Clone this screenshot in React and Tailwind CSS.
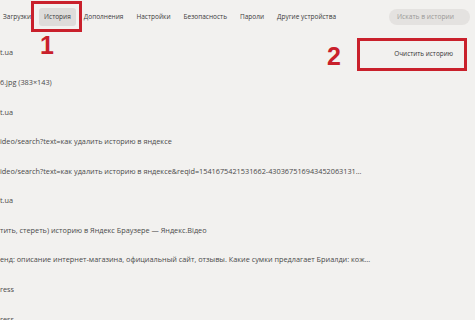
import React from 'react';

const NAV = ['Загрузки', 'История', 'Дополнения', 'Настройки', 'Безопасность', 'Пароли', 'Другие устройства'];

const ROWS = [
  't.ua',
  '6.jpg (383×143)',
  't.ua',
  'ideo/search?text=как удалить историю в яндексе',
  'ideo/search?text=как удалить историю в яндексе&reqid=1541675421531662-430367516943452063131…',
  't.ua',
  'тить, стереть) историю в Яндекс Браузере — Яндекс.Відео',
  'енд: описание интернет-магазина, официальный сайт, отзывы. Какие сумки предлагает Бриалди: кож…',
  'ress',
  'ress',
];

const App = () => {
  return (
    <div
      className="relative w-[475px] h-[320px] overflow-hidden bg-[#f2f1ef] text-[#3a3a3a]"
      style={{ fontFamily: '"Open Sans", "Liberation Sans", sans-serif' }}
    >
      {/* top bar */}
      <div className="flex items-center h-[34px] pl-[3px] pr-[5px] text-[6.5px]">
        <div className="flex items-center gap-[13px]">
          {NAV.map((item) => (
            <span
              key={item}
              className={item === 'История' ? 'bg-[#dedcda] rounded-[3px] px-[5px] py-[4px] -mx-[5px]' : ''}
            >
              {item}
            </span>
          ))}
        </div>
        <div className="ml-auto w-[81px] h-[16px] rounded-full bg-[#e4e2e0] flex items-center px-[8px] text-[6.7px] text-[#9a9896]">
          Искать в истории
        </div>
      </div>

      {/* history list + clear button */}
      <div className="flex justify-between">
        <div className="flex flex-col pt-[4px] w-[350px] text-[7.3px] text-[#4a4a4a]">
          {ROWS.map((row, i) => (
            <div key={i} className="h-[29.6px] flex items-center whitespace-nowrap">
              {row}
            </div>
          ))}
        </div>
        <div className="mt-[6px] mr-[8px] w-[105px] h-[28px] flex items-center justify-end pr-[14px] text-[6.4px] text-[#333]">
          Очистить историю
        </div>
      </div>

      {/* annotations */}
      <div className="absolute left-[31px] top-[1px] w-[51px] h-[31px] border-[3px] border-[#c9202b]" />
      <div className="absolute left-[40px] top-[33px] text-[25px] leading-none font-black text-[#c9202b]" style={{ fontFamily: '"Liberation Sans", sans-serif' }}>
        1
      </div>
      <div className="absolute left-[357px] top-[38px] w-[110px] h-[33px] border-[3px] border-[#c9202b]" />
      <div className="absolute left-[327px] top-[44px] text-[25px] leading-none font-black text-[#c9202b]" style={{ fontFamily: '"Liberation Sans", sans-serif' }}>
        2
      </div>
    </div>
  );
};

export default App;
